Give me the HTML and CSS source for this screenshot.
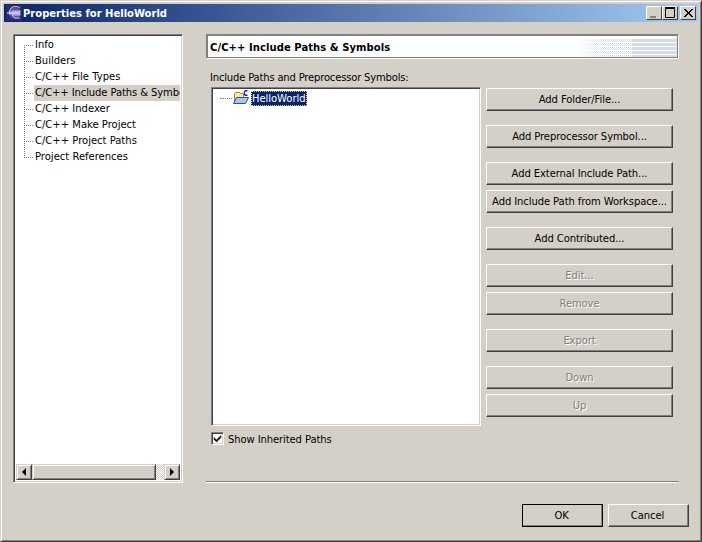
FILE: index.html
```html
<!DOCTYPE html>
<html lang="en">
<head>
    <meta charset="UTF-8">
    <title>Properties for HelloWorld</title>
    <link rel="stylesheet" href="styles.css">
</head>
<body>
    <div class="window">
        <div class="titlebar">
            <svg class="title-icon" width="16" height="16" viewBox="0 0 16 16">
                <rect width="16" height="16" fill="#2a2a6e"/>
                <circle cx="9" cy="8" r="6" fill="#5a4fa8"/>
                <path d="M14 3A7 7 0 0 0 5 3L3 7H14V6H6M3 9H14V10H6L9 13H14" fill="none" stroke="#c8c4ec" stroke-width="1"/>
                <path d="M1 8H14" stroke="#ffffff" stroke-width="1"/>
            </svg>
            <span class="title-text">Properties for HelloWorld</span>
            <div class="title-buttons">
                <button class="ctl">
                    <svg width="16" height="14" viewBox="0 0 16 14"><rect x="4" y="10" width="6" height="2" fill="#808080"/></svg>
                </button>
                <button class="ctl">
                    <svg width="16" height="14" viewBox="0 0 16 14"><path d="M3.5 2.5H12.5V11.5H3.5Z M3 1.5H13" fill="none" stroke="#000"/></svg>
                </button>
                <button class="ctl ctl-close">
                    <svg width="16" height="14" viewBox="0 0 16 14"><path d="M4 3L12 11M5 3L13 11M12 3L4 11M13 3L5 11" stroke="#000" fill="none"/></svg>
                </button>
            </div>
        </div>

        <div class="content">
            <div class="tree-panel">
                <ul class="tree">
                    <li class="tree-row"><span class="tree-label">Info</span></li>
                    <li class="tree-row"><span class="tree-label">Builders</span></li>
                    <li class="tree-row"><span class="tree-label">C/C++ File Types</span></li>
                    <li class="tree-row"><span class="tree-label selected">C/C++ Include Paths &amp; Symbols</span></li>
                    <li class="tree-row"><span class="tree-label">C/C++ Indexer</span></li>
                    <li class="tree-row"><span class="tree-label">C/C++ Make Project</span></li>
                    <li class="tree-row"><span class="tree-label">C/C++ Project Paths</span></li>
                    <li class="tree-row"><span class="tree-label">Project References</span></li>
                </ul>
                <div class="hscroll">
                    <div class="sb-btn"><span class="arrow-left"></span></div>
                    <div class="sb-thumb"></div>
                    <div class="sb-track"></div>
                    <div class="sb-btn"><span class="arrow-right"></span></div>
                </div>
            </div>

            <div class="page">
                <div class="page-header">
                    <span class="page-title">C/C++ Include Paths &amp; Symbols</span>
                    <div class="banner"></div>
                </div>

                <div class="page-body">
                    <div class="paths-label">Include Paths and Preprocessor Symbols:</div>
                    <div class="paths-row">
                        <div class="paths-list">
                            <div class="path-item">
                                <span class="path-line"></span>
                                <svg class="folder" width="18" height="16" viewBox="0 0 18 16">
                                    <path d="M2.5 12V3.5L3.5 2.5H7.5L8.5 3.5H11.5V7" fill="#fbe3a0" stroke="#a8843c"/>
                                    <path d="M1.5 13.5L4.5 7.5H16.5L13.5 13.5Z" fill="#a9c6ee" stroke="#2f4f8f"/>
                                    <path d="M15.5 .8H13.2L12.5 1.5V4.5L13.2 5.2H15.5" fill="none" stroke="#1428a8" stroke-width="1.4"/>
                                </svg>
                                <span class="path-name">HelloWorld</span>
                            </div>
                        </div>
                        <div class="button-col">
                            <button class="btn gap-l">Add Folder/File...</button>
                            <button class="btn gap-l">Add Preprocessor Symbol...</button>
                            <button class="btn gap-s">Add External Include Path...</button>
                            <button class="btn gap-l">Add Include Path from Workspace...</button>
                            <button class="btn gap-l">Add Contributed...</button>
                            <button class="btn gap-s" disabled>Edit...</button>
                            <button class="btn gap-l" disabled>Remove</button>
                            <button class="btn gap-l" disabled>Export</button>
                            <button class="btn gap-s" disabled>Down</button>
                            <button class="btn" disabled>Up</button>
                        </div>
                    </div>
                    <label class="check-row">
                        <span class="check">
                            <svg width="9" height="9" viewBox="0 0 9 9"><path d="M1 3.5L3.5 6L8 1.5V3.5L3.5 8L1 5.5Z" fill="#000" stroke="#000" stroke-width=".4"/></svg>
                        </span>
                        Show Inherited Paths
                    </label>
                </div>

                <div class="separator"></div>
            </div>
        </div>

        <div class="footer">
            <button class="btn btn-foot btn-default">OK</button>
            <button class="btn btn-foot">Cancel</button>
        </div>
    </div>
</body>
</html>
```

FILE: styles.css
```css
* {
    box-sizing: border-box;
}

html, body {
    margin: 0;
    padding: 0;
}

body {
    width: 702px;
    height: 542px;
    overflow: hidden;
    background: #d4d0c8;
    font-family: "DejaVu Sans", Tahoma, sans-serif;
    font-size: 10px;
    color: #000;
}

.window {
    width: 702px;
    height: 542px;
    background: #d4d0c8;
    border: 1px solid;
    border-color: #d4d0c8 #404040 #404040 #d4d0c8;
    box-shadow: inset 1px 1px 0 #fff, inset -1px -1px 0 #808080;
    padding: 3px;
    display: flex;
    flex-direction: column;
}

.titlebar {
    height: 18px;
    flex: none;
    display: flex;
    align-items: center;
    padding: 0 2px;
    background: linear-gradient(to right, #0a246a, #a6caf0);
}

.title-icon {
    flex: none;
    margin-right: 1px;
}

.title-text {
    color: #fff;
    font-weight: bold;
    font-size: 10px;
    flex: 1;
}

.title-buttons {
    display: flex;
}

.ctl {
    width: 16px;
    height: 14px;
    padding: 0;
    border: 1px solid;
    border-color: #fff #404040 #404040 #fff;
    background: #d4d0c8;
    display: block;
    overflow: hidden;
}

.ctl svg {
    display: block;
    margin: -1px;
}

.ctl-close {
    margin-left: 2px;
}

.content {
    display: flex;
    height: 449px;
    margin-top: 12px;
    padding-left: 9px;
    flex: none;
}

.tree-panel {
    width: 170px;
    height: 449px;
    flex: none;
    display: flex;
    flex-direction: column;
    border: 1px solid;
    border-color: #808080 #fff #fff #808080;
    box-shadow: inset 1px 1px 0 #404040, inset -1px -1px 0 #d4d0c8;
    padding: 2px;
    background: #fff;
}

.tree {
    list-style: none;
    margin: 0;
    padding: 0;
    flex: 1;
    overflow: hidden;
}

.tree-row {
    display: flex;
    height: 16px;
    white-space: nowrap;
    overflow: hidden;
}

.tree-row::before {
    content: "";
    flex: none;
    width: 10px;
    margin-left: 8px;
    background:
        repeating-linear-gradient(to right, #808080 0 1px, transparent 1px 2px) 0 8px / 10px 1px no-repeat,
        repeating-linear-gradient(to bottom, #808080 0 1px, transparent 1px 2px) 0 0 / 1px 16px no-repeat;
}

.tree-row:first-child::before {
    background:
        repeating-linear-gradient(to right, #808080 0 1px, transparent 1px 2px) 0 8px / 10px 1px no-repeat,
        repeating-linear-gradient(to bottom, #808080 0 1px, transparent 1px 2px) 0 8px / 1px 8px no-repeat;
}

.tree-row:last-child::before {
    background:
        repeating-linear-gradient(to right, #808080 0 1px, transparent 1px 2px) 0 8px / 10px 1px no-repeat,
        repeating-linear-gradient(to bottom, #808080 0 1px, transparent 1px 2px) 0 0 / 1px 9px no-repeat;
}

.tree-label {
    padding: 0 1px;
    line-height: 16px;
}

.selected {
    background: #d4d0c8;
    flex: 1;
    min-width: 0;
    overflow: hidden;
    letter-spacing: -0.1px;
}

.hscroll {
    height: 16px;
    flex: none;
    display: flex;
}

.sb-btn {
    width: 16px;
    flex: none;
    display: flex;
    align-items: center;
    justify-content: center;
    background: #d4d0c8;
    border: 1px solid;
    border-color: #d4d0c8 #404040 #404040 #d4d0c8;
    box-shadow: inset 1px 1px 0 #fff, inset -1px -1px 0 #808080;
}

.arrow-left {
    border: 4px solid transparent;
    border-left: 0;
    border-right-color: #000;
}

.arrow-right {
    border: 4px solid transparent;
    border-right: 0;
    border-left-color: #000;
}

.sb-thumb {
    flex: 1;
    background: #d4d0c8;
    border: 1px solid;
    border-color: #d4d0c8 #404040 #404040 #d4d0c8;
    box-shadow: inset 1px 1px 0 #fff, inset -1px -1px 0 #808080;
}

.sb-track {
    width: 8px;
    flex: none;
    background: repeating-conic-gradient(#d4d0c8 0 25%, #fff 0 50%) 0 0 / 2px 2px;
}

.page {
    width: 473px;
    margin-left: 23px;
    flex: none;
    display: flex;
    flex-direction: column;
}

.page-header {
    height: 25px;
    flex: none;
    display: flex;
    align-items: center;
    justify-content: space-between;
    padding: 2px 0 0 3px;
    background: #fff;
    border: 1px solid;
    border-color: #808080 #fff #fff #808080;
    box-shadow: inset 0 1px 0 #808080, inset 1px 0 0 #808080, inset 0 -1px 0 #808080, inset -1px 0 0 #808080;
}

.page-title {
    font-weight: bold;
    font-size: 10px;
    letter-spacing: 0.07px;
}

.banner {
    width: 101px;
    height: 18px;
    margin-right: 1px;
    background: repeating-linear-gradient(to bottom, #d4dbea 0 3px, #fff 3px 4px);
    -webkit-mask-image: linear-gradient(to right, transparent, #000 30%);
    mask-image: linear-gradient(to right, transparent, #000 30%);
}

.banner::before {
    content: "";
    display: block;
    width: 55%;
    height: 100%;
    background: repeating-conic-gradient(#fff 0 25%, transparent 0 50%) 0 0 / 2px 2px;
}

.page-body {
    padding: 12px 6px 0 4px;
    flex: 1;
}

.paths-label {
    height: 16px;
    line-height: 14px;
    letter-spacing: -0.18px;
}

.paths-row {
    display: flex;
    gap: 5px;
    margin-left: 1px;
}

.paths-list {
    width: 270px;
    height: 339px;
    flex: none;
    padding: 2px;
    background: #fff;
    border: 1px solid;
    border-color: #808080 #fff #fff #808080;
    box-shadow: inset 1px 1px 0 #404040, inset -1px -1px 0 #d4d0c8;
}

.path-item {
    display: flex;
    align-items: center;
    height: 16px;
}

.path-line {
    width: 12px;
    margin-left: 6px;
    border-top: 1px dotted #808080;
}

.folder {
    flex: none;
    margin-right: 1px;
}

.path-name {
    background: #0a246a;
    color: #fff;
    outline: 1px dotted #e8d070;
    outline-offset: -1px;
    padding: 0 1px;
    line-height: 15px;
    letter-spacing: -0.05px;
}

.button-col {
    width: 187px;
    flex: none;
    display: flex;
    flex-direction: column;
    padding-top: 1px;
}

.btn {
    height: 23px;
    padding: 0;
    font: inherit;
    letter-spacing: -0.09px;
    color: #000;
    flex: none;
    background: #d4d0c8;
    border: 1px solid;
    border-color: #fff #404040 #404040 #fff;
    box-shadow: inset -1px -1px 0 #808080;
    white-space: nowrap;
}

.btn:disabled {
    color: #808080;
    text-shadow: 1px 1px 0 #fff;
}

.gap-l {
    margin-bottom: 14px;
}

.gap-s {
    margin-bottom: 5px;
}

.check-row {
    display: flex;
    align-items: flex-start;
    gap: 4px;
    margin: 6px 0 0 1px;
    height: 15px;
    line-height: 15px;
    letter-spacing: -0.1px;
}

.check {
    width: 13px;
    height: 13px;
    display: flex;
    align-items: center;
    justify-content: center;
    background: #fff;
    border: 1px solid;
    border-color: #808080 #fff #fff #808080;
    box-shadow: inset 1px 1px 0 #404040, inset -1px -1px 0 #d4d0c8;
}

.separator {
    height: 2px;
    flex: none;
    border-top: 1px solid #808080;
    border-bottom: 1px solid #fff;
}

.footer {
    display: flex;
    justify-content: flex-end;
    gap: 5px;
    padding: 21px 9px 0 0;
}

.btn-foot {
    width: 81px;
    padding-right: 2px;
}

.btn-default {
    outline: 1px solid #000;
    outline-offset: -1px;
}
```
